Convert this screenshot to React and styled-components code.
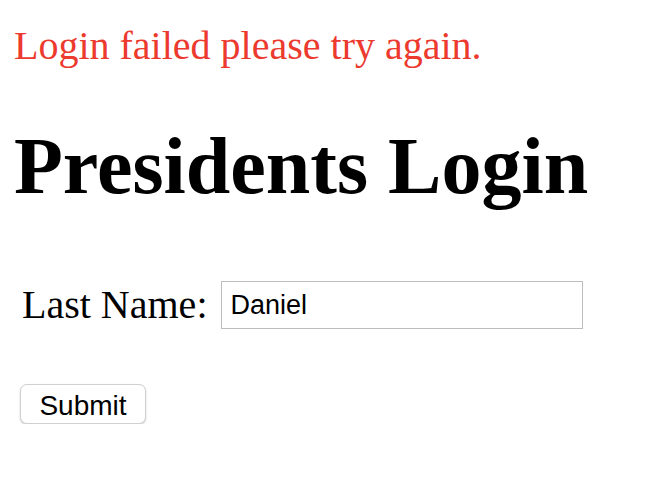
import React from "react";
import styled, { createGlobalStyle } from "styled-components";

const Global = createGlobalStyle`
  html, body { margin: 0; padding: 0; background: #fff; }
  body { font-family: "Liberation Serif", "Times New Roman", serif; color: #000; }
`;

const Page = styled.div`
  padding: 24px 0 0 14px;
`;

const ErrorText = styled.div`
  font-size: 40px;
  line-height: 44px;
  color: #ec3a2e;
`;

const Title = styled.h1`
  margin: 54px 0 0;
  font-size: 80px;
  line-height: 88px;
  font-weight: bold;
`;

const Form = styled.form`
  display: flex;
  flex-direction: column;
  align-items: flex-start;
`;

const Row = styled.div`
  display: flex;
  align-items: center;
  gap: 13px;
  margin: 71px 0 0 8px;
`;

const Label = styled.label`
  font-size: 40px;
  line-height: 44px;
`;

const Input = styled.input`
  box-sizing: border-box;
  width: 362px;
  height: 48px;
  border: 1px solid #bdbdbd;
  padding: 0 9px;
  font-family: "Liberation Sans", Arial, sans-serif;
  font-size: 27px;
  color: #000;
  outline: none;
`;

const Button = styled.button`
  box-sizing: border-box;
  margin: 55px 0 0 6px;
  width: 126px;
  height: 40px;
  border: 1px solid #d0d0d0;
  border-radius: 7px;
  background: #fff;
  box-shadow: 0 1px 2px rgba(0, 0, 0, 0.2);
  font-family: "Liberation Sans", Arial, sans-serif;
  font-size: 28px;
  line-height: 1;
  color: #000;
  padding: 3px 0 0;
`;

export default function App() {
  return (
    <Page>
      <Global />
      <ErrorText>Login failed please try again.</ErrorText>
      <Title>Presidents Login</Title>
      <Form onSubmit={(e) => e.preventDefault()}>
        <Row>
          <Label htmlFor="last">Last Name:</Label>
          <Input id="last" defaultValue="Daniel" />
        </Row>
        <Button type="submit">Submit</Button>
      </Form>
    </Page>
  );
}
